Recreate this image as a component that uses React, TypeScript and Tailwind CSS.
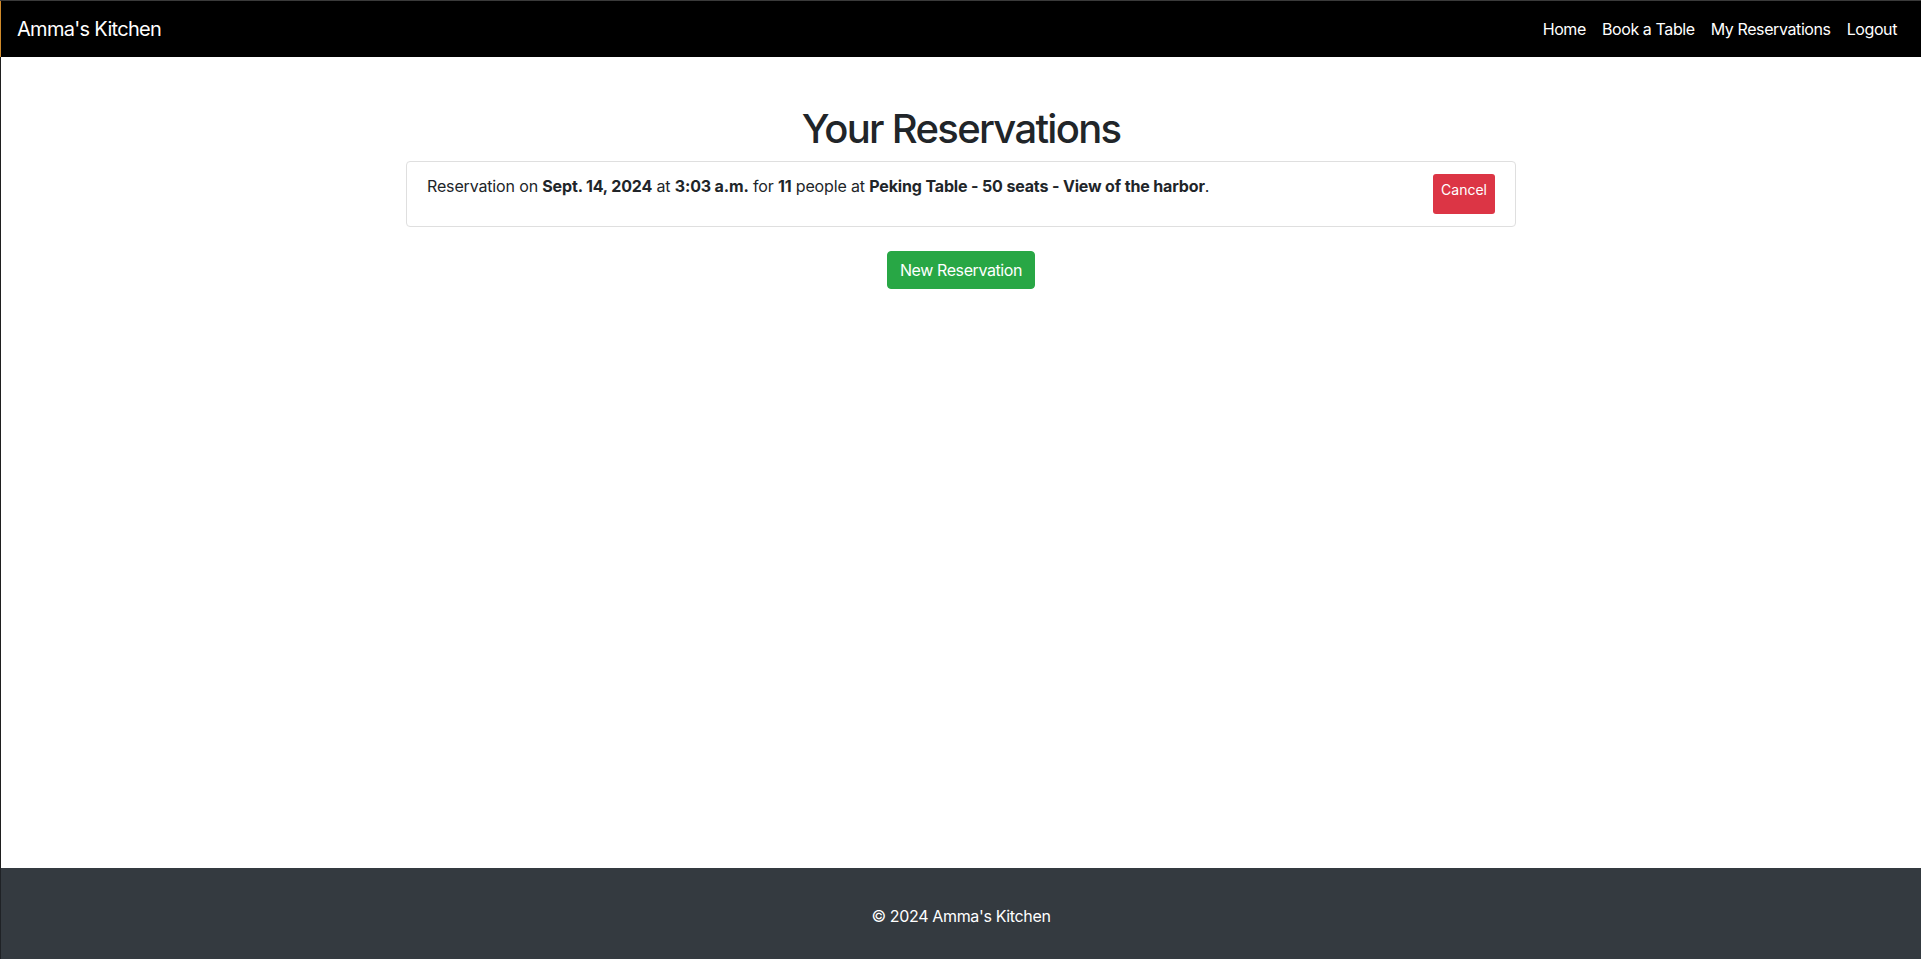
const nav = ['Home', 'Book a Table', 'My Reservations', 'Logout']

const font = { fontFamily: 'Inter, "Noto Sans", sans-serif' }

export default function App() {
  return (
    <div className="flex min-h-screen flex-col border-t border-[#3a3a3a] bg-white text-[#212529]" style={font}>
      <header className="flex h-[56px] items-center justify-between border-l border-[#d08a2a] bg-black px-4">
        <a href="#" className="py-[5px] text-[20px] leading-[30px] tracking-[-0.7px] text-white">
          Amma's Kitchen
        </a>
        <nav className="flex">
          {nav.map((n) => (
            <a key={n} href="#" className="px-2 py-2 text-[16px] leading-6 tracking-[-0.4px] text-white">
              {n}
            </a>
          ))}
        </nav>
      </header>

      <main className="flex-1 border-l border-[#1f1f1f]">
        <div className="mx-auto max-w-[1140px] px-[15px] pt-[48px]">
          <h1 className="mb-2 text-center text-[40px] font-medium leading-[48px] tracking-[-1.7px]">
            Your Reservations
          </h1>

          <div className="rounded border border-[#dfdfdf]">
            <div className="flex items-stretch justify-between px-5 py-3">
              <span className="text-[16px] leading-6 tracking-[-0.15px]">
                Reservation on <strong className="font-bold">Sept. 14, 2024</strong> at{' '}
                <strong className="font-bold">3:03 a.m.</strong> for <strong className="font-bold">11</strong> people
                at <strong className="font-bold">Peking Table - 50 seats - View of the harbor</strong>.
              </span>
              <button className="flex h-[40px] items-start self-start rounded-[3px] bg-[#dc3545] px-2 pt-[5px] text-[14px] leading-[21px] text-white">
                Cancel
              </button>
            </div>
          </div>

          <div className="mt-6 flex justify-center">
            <button className="rounded border border-[#28a745] bg-[#28a745] px-3 py-[6px] text-[16px] leading-6 tracking-[-0.4px] text-white">
              New Reservation
            </button>
          </div>
        </div>
      </main>

      <footer className="h-[91px] border-l border-[#1f2226] bg-[#343a40] pt-[36px] text-center text-[16px] leading-6 tracking-[-0.35px] text-white">
        © 2024 Amma's Kitchen
      </footer>
    </div>
  )
}
